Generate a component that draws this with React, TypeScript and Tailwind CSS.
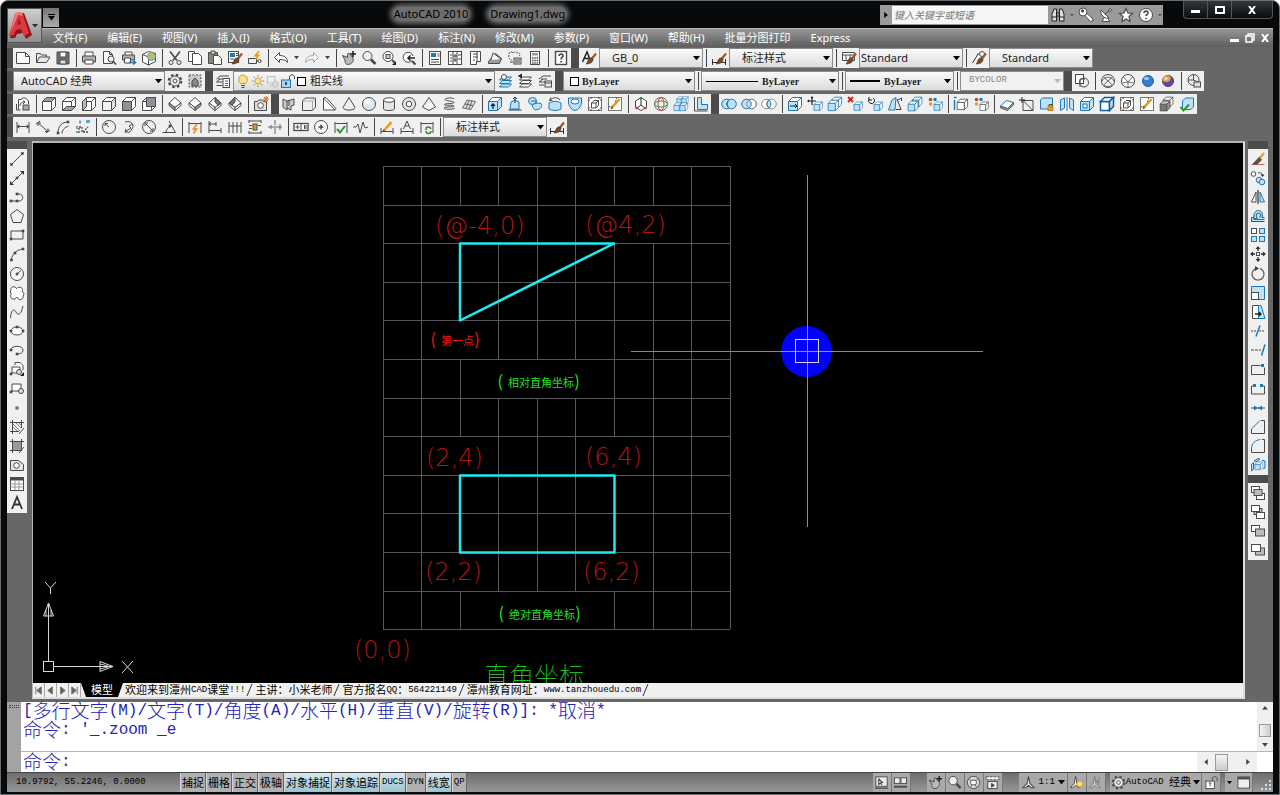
import React, { useState } from 'react';

const K = '#4a4a4a';
const B = '#1f78b4';
const L = '#bfe1f6';
const G = '#c9cdd2';
const O = '#e79a1c';

const Box = ({ x = 0, y = 0, s = 1, stroke = K, front = '#fff', top = '#fff', side = '#fff' }: {
  x?: number; y?: number; s?: number; stroke?: string; front?: string; top?: string; side?: string;
}) => (
  <g transform={`translate(${x} ${y}) scale(${s})`} stroke={stroke}>
    <path d="M1.500 5.500h9v9h-9z" fill={front} />
    <path d="M1.500 5.500l4-4h9l-4 4z" fill={top} />
    <path d="M10.500 5.500l4-4v9l-4 4z" fill={side} />
  </g>
);

const Iso = ({ a = '#fff', b = '#fff', c = '#fff' }: { a?: string; b?: string; c?: string }) => (
  <>
    <path d="M8 1.500l6 5.500L8 11.500 2 7z" fill={a} />
    <path d="M2 7v2.500L8 14.500v-3z" fill={b} />
    <path d="M14 7v2.500L8 14.500v-3z" fill={c} />
  </>
);

const Dots = ({ pts }: { pts: [number, number][] }) => (
  <>{pts.map(([x, y]) => <rect key={`${x}-${y}`} x={x - 1} y={y - 1} width="2" height="2" fill={K} strokeWidth=".6" />)}</>
);

const Brush = () => (
  <>
    <path d="M15 3.500L10.500 9" stroke="#9a5a2c" strokeWidth="2.200" />
    <path d="M11.500 8c1 1 .5 3.500-1 4.500-1.500 1-4 1.500-5.500 1.500 2-1.500 1.500-5 4-6z" fill="#7a4a28" stroke="#5b3418" strokeWidth=".6" />
  </>
);

const Pencil = () => (
  <>
    <path d="M5 11.500L12.500 3" stroke={O} strokeWidth="2.600" />
    <path d="M4 13l.5-2.500 1.500 1.500z" fill={K} stroke={K} strokeWidth=".5" />
  </>
);

const Page = ({ x = 0 }: { x?: number }) => (
  <path transform={`translate(${x} 0)`} d="M2.500 1.500h6l3 3v9h-9zM8.500 1.500v3h3" fill="#fff" />
);

const Layers = ({ fill = '#fff', stroke = K, x = 0 }: { fill?: string; stroke?: string; x?: number }) => (
  <g transform={`translate(${x} 0)`} fill={fill} stroke={stroke}>
    <path d="M1.500 14l3-3h9l-3 3z" />
    <path d="M1.500 10.500l3-3h9l-3 3z" />
    <path d="M1.500 7l3-3h9l-3 3z" />
  </g>
);

const DimEnds = () => <path d="M2 3v11M14 3v11" />;

const Globe = () => (
  <>
    <circle cx="8" cy="8" r="6.500" />
    <path d="M3.500 4l9 8M12.500 4l-9 8M2 8c3-5 9-5 12 0M4 12c2 2 6 2 8 0" strokeWidth=".8" />
  </>
);

const Stamp = ({ fill = '#fff' }: { fill?: string }) => (
  <>
    <rect x="1.500" y="1.500" width="13" height="13" fill={fill} stroke="#777" />
    <path d="M4.500 7l2.500-2.500h4.500v5L9 12H4.500zM4.500 7H9v5M9 7l2.500-2.500" fill="#fff" />
    <path d="M1 4h2M1 12h2M13 4h2M13 12h2M4 1v2M12 1v2M4 13v2M12 13v2" />
  </>
);

const Gear = () => (
  <>
    <circle cx="8" cy="8" r="6.300" strokeWidth="2" strokeDasharray="2.600 2.350" />
    <circle cx="8" cy="8" r="5" fill="#eee" />
    <circle cx="8" cy="8" r="2" fill="#fff" />
  </>
);

const Palette = () => (
  <>
    <circle cx="3.500" cy="3.500" r="1.800" fill="#c8432e" stroke="none" />
    <rect x="6.500" y="2" width="3" height="3" fill={B} stroke="none" />
    <rect x="2" y="6.500" width="3" height="3" fill={O} stroke="none" />
  </>
);

const icons: Record<string, React.ReactNode> = {
  new: <path d="M1.500 2.500h9l4 4v7h-13zM10.500 2.500v4h4" fill="#fff" />,
  open: <path d="M1.500 12.500v-9h4l1 1.500h5v2M1.500 12.500l3-5.500h10.500l-3.500 5.500z" fill="#e8e8e8" />,
  save: <><path d="M2 2h12v12H2z" fill="#6b7078" /><path d="M5 2h6v5H5z" fill="#fff" /><path d="M5 10h6v4H5z" fill="#ddd" /></>,
  print: <><path d="M4 6V2h8v4" fill="#fff" /><path d="M1.500 6h13v6h-13z" fill="#aeb3b8" /><path d="M4 10h8v4H4z" fill="#fff" /></>,
  preview: <><Page /><circle cx="10" cy="9" r="3" fill="#e4f1fa" /><path d="M12 11l3 3.500" strokeWidth="1.800" /></>,
  publish: <><path d="M4 5V2h7v3" fill="#fff" /><path d="M1.500 5h12v5h-12z" fill="#aeb3b8" /><path d="M3.500 8h6v5h-6z" fill="#fff" /><path d="M8 12.500h6M12 10.500l2.500 2-2.500 2" stroke={B} strokeWidth="1.600" /></>,
  dwf: <><path d="M1.500 4.500l6-3 7 2v8l-7 3.500-6-3z" fill="#fff" /><path d="M1.500 4.500l6 2.500v8M7.500 7l7-3.500" /><circle cx="10.500" cy="6.500" r="4" fill="#8fc1dc" stroke="#6c9a6c" /><path d="M8 5c2-3 5-1 5.500 1-1 3-4 2-5.500-1z" fill="#e2b23a" stroke="none" /></>,
  cut: <><path d="M3 1.500l7 9M13 1.500l-7 9" strokeWidth="1.600" /><circle cx="4" cy="12.500" r="2" /><circle cx="12" cy="12.500" r="2" /></>,
  copy: <><path d="M1.500 1.500h6v10h-6z" fill="#fff" /><path d="M5.500 3.500h6l3 3v8h-9z" fill="#fff" /></>,
  paste: <><path d="M1.500 2.500h9v11h-9z" fill="#8c8478" /><path d="M4 1h4v3H4z" fill="#ddd" /><path d="M6.500 5.500h5l3 3v6h-8z" fill="#fff" /></>,
  match: <><rect x="1.500" y="1.500" width="10" height="11" fill="#fff" /><rect x="3" y="3" width="5" height="4" fill={B} stroke="none" /><path d="M9 3.500h2M9 5.500h2M3 9h4" /><Brush /></>,
  blockEdit: <><path d="M1.500 8.500h8v5h-8zM9.500 11h5" /><circle cx="12.500" cy="11" r="1.500" fill="#fff" /><path d="M12 1l-3.500 4.500h3L9 9" stroke={O} strokeWidth="1.800" /></>,
  undo: <path d="M1.500 7.500l5-5v3c5 0 8 2 8 7-1.500-2.500-4-3-8-3v3z" fill="#fff" />,
  redo: <path d="M14.500 7.500l-5-5v3c-5 0-8 2-8 7 1.500-2.500 4-3 8-3v3z" fill="#f4f4f4" stroke="#aaa" />,
  pan: <><path d="M1.500 5.500l5 2V4c1-1 2-1 2.500 0l3 4c1 3-1 6-4.500 6.500C4 14.500 4 12 4 10z" fill="#b9b9b9" /><path d="M12 1v6M9 4h6" strokeWidth="1.600" stroke="#222" /></>,
  zoom: <><circle cx="6.500" cy="6" r="4.500" fill="#e6f1f8" /><path d="M10 9.500l4.500 4.500" strokeWidth="2.600" /></>,
  zoomWin: <><circle cx="7" cy="6.500" r="5" fill="#fff" /><rect x="5" y="4.500" width="4" height="4" fill="#ccc" /><path d="M11 10l2.500 2.500" strokeWidth="2" /><path d="M15 11v4h-4z" fill="#222" stroke="none" /></>,
  zoomPrev: <><path d="M11 10.500A5 5 0 1 1 12 6" fill="#fff" /><path d="M14 8H7.500M9.500 5.500L7 8l2.500 2.500" stroke="#222" strokeWidth="1.500" /><path d="M11 11l3.500 3.500" strokeWidth="2.200" /></>,
  props: <><rect x="2.500" y="1.500" width="11" height="13" fill="#fff" /><rect x="4" y="3" width="5" height="4" fill={B} stroke="none" /><path d="M10.500 4h2M10.500 6h2M4 9.500h8M4 12h8" /></>,
  design: <><rect x="1.500" y="1.500" width="13" height="13" fill="#fff" /><path d="M6 2v12M10 2v12M3 5h2M3 8h2M3 11h2M7 5h2v2H7zM7 9h2v2H7zM11 5h3M11 9h3" /></>,
  palettes: <><path d="M3.500 1.500h10v10h-4v3h-6z" fill="#fff" /><path d="M6 4h5M6 7h5M6 10h2M10 2v9" /></>,
  sheet: <><path d="M1.500 11.500l7-8 6 5-2 5h-11z" fill="#9b9fa3" /><path d="M4 10L6 3l8 6" fill="#fff" /></>,
  markup: <><path d="M2 4c0-2 3-3 4-1 2-2 4-1 4 0 3-1 4 2 2 3M2 5c-1 3 1 5 3 5" strokeDasharray="2 1" /><rect x="7" y="8" width="7" height="6" fill="#ddd" /><path d="M8 10h5M8 12h5M3 12h3" /></>,
  calc: <><rect x="3.500" y="1.500" width="9" height="13" fill="#fff" /><rect x="5" y="3" width="6" height="2.500" fill="#999" stroke="none" /><path d="M5 8h6M5 10.500h6M5 13h6" strokeDasharray="1.500 .8" strokeWidth="1.500" /></>,
  help: <><rect x="2.500" y="1.500" width="11" height="13" fill="#fff" strokeWidth="1.400" /><path d="M6 6c0-2.500 4.500-2.500 4 0 0 1.500-2 1.500-2 3.500M8 11v1.500" strokeWidth="1.700" /></>,
  textStyle: <><path d="M1.500 12L6 2l4 10M3.500 8.500h5" strokeWidth="1.500" stroke="#222" /><Brush /></>,
  dimStyle: <><path d="M1.500 9v6M14.500 9v6M1.500 12.500h13" stroke="#333" /><Brush /></>,
  tableStyle: <><path d="M1.500 2.500h12v8h-12zM1.500 5h12M5 5v5M9 5v5" fill="#fff" /><Brush /></>,
  leaderStyle: <><path d="M1.500 13L7 4h3" stroke="#333" /><circle cx="11" cy="4" r="2.500" fill="#fff" /><Brush /></>,
  gear: <Gear />,
  wsSave: <><rect x="2" y="2" width="12" height="12" strokeDasharray="2 1.500" fill="#ccc" /><path d="M5 8l3-3 3 3v5H5z" fill="#8a8a8a" /></>,
  layerProps: <><path d="M5 3h9M3 6h6M1.500 9h6M1.500 12.500h6M5 3L1.500 6M5 6L1.500 9" /><rect x="8" y="5.500" width="6.500" height="9" fill="#fff" /><path d="M10 8h3M10 10.500h3M10 12.500h3" stroke={B} /></>,
  bulb: <><path d="M5.500 10.500C2 7 4 2 8 2s6 5 2.500 8.500z" fill="#fbe28a" stroke="#c79a2c" /><path d="M6 12.500h4M6.500 14.500h3" /></>,
  sun: <><circle cx="8" cy="8" r="3.500" fill="#fbe28a" stroke="#c79a2c" /><path d="M8 1v2M8 13v2M1 8h2M13 8h2M3 3l1.500 1.500M11.500 11.500L13 13M13 3l-1.500 1.500M4.500 11.500L3 13" stroke="#8a7a40" /></>,
  vpFreeze: <g stroke="#bbb"><rect x="2.500" y="2.500" width="8" height="7" fill="#eee" /><circle cx="11" cy="11" r="3" fill="#ddd" /><path d="M5 12h2" /></g>,
  unlock: <><path d="M9.500 7V4c0-3 5-3 5 0v2" /><rect x="1.500" y="7" width="9" height="7.500" fill="#a9d3ee" stroke={B} /><path d="M6 9v3" stroke="#123" strokeWidth="1.500" /></>,
  layCurrent: <><Layers fill={L} stroke={B} x={1} /><circle cx="7" cy="4" r="2.500" fill="#fff" /></>,
  layPrev: <><Layers x={1} /><path d="M5 1L1.500 3 5 5" fill="#222" stroke="#222" /></>,
  layState: <><path d="M6 3h8M4 6h6M2 9h6M2 12h5" /><path d="M6 3L2 6M6 6L2 9" /><rect x="8" y="8" width="6.500" height="6" fill="#eee" /><path d="M8 10h6" /></>,
  vs2d: <><rect x="1.500" y="1.500" width="8" height="9" fill="#fff" /><circle cx="10" cy="9.500" r="4.500" fill="none" /><path d="M6 14V6h5" /></>,
  vsWire: <Globe />,
  vsHidden: <><circle cx="8" cy="8" r="6.500" fill="#fff" /><path d="M3.500 4l4.500 5 4.500-5M8 9v5M2.500 10l5.500-1 5.500 1" strokeWidth=".8" /></>,
  vsReal: <><circle cx="8" cy="8" r="5.500" fill="#2f80cf" stroke="#1f62a5" /><ellipse cx="6.500" cy="5.500" rx="2.500" ry="1.700" fill="#9ccaf0" stroke="none" /></>,
  vsConcept: <><circle cx="8" cy="8" r="5.500" fill="#5a4aa8" stroke="#4a3a80" /><path d="M2.500 8c0-5 5-7 8-4 1 3-2 7-8 4z" fill="#eda33a" stroke="none" /><circle cx="6" cy="5.500" r="1.500" fill="#fbe0a0" stroke="none" /></>,
  vsManage: <><circle cx="7.500" cy="7" r="5.500" /><path d="M7.500 1.500v5.500L12 9M2 7h6" /><rect x="8" y="9" width="6.500" height="5" fill="#ddd" /></>,
  viewMgr: <><path d="M3.500 13.500v-10h3l1-1.500h3l3 3v3" fill="#fff" /><path d="M5 10c0-3 2-4 4-4M8 4.500L10 6 8 8" /><path d="M1.500 8v6h4" /><rect x="8" y="9" width="6" height="5" fill="#aaa" /></>,
  vTop: <Box top="#9a9fa5" />,
  vBottom: <><Box /><path d="M1.500 14.500l4-4h9l-4 4z" fill="#9a9fa5" /></>,
  vLeft: <><Box /><path d="M1.500 14.500v-9l4-4v9z" fill="#b5b9be" /></>,
  vRight: <Box side="#e0e3e6" front="#f4f4f4" />,
  vFront: <Box front="#8b929a" />,
  vBack: <><Box /><path d="M5.500 1.500h9v9h-9z" fill="#8b929a" /></>,
  isoSW: <Iso b="#9a9fa5" />,
  isoSE: <Iso c="#9a9fa5" />,
  isoNE: <><Iso /><path d="M8 1.500l6 5.500-3 2.200L8 6z" fill="#70767d" /></>,
  isoNW: <><Iso /><path d="M8 1.500L2 7l3 2.200L8 6z" fill="#70767d" /></>,
  camera: <><path d="M1.500 5.500h3l1-1.500h4l1 1.500h3v9h-12z" fill="#ddd" /><circle cx="7.500" cy="9.500" r="2.800" fill="#fff" /><path d="M13 0v6M10 3h6M11 1l4 4M15 1l-4 4" stroke="#e06a1c" /></>,
  polysolid: <><path d="M2 3l4 2v9l-4-3zM6 5l7-2v6l-3 1v4l-4-2" fill={G} /><path d="M8 4v6" /></>,
  box: <><path d="M1.500 5l3-3h10v9l-3 3.500h-10z" fill="#eee" /><path d="M1.500 5h10v9.500M11.500 5l3-3" stroke="#aaa" /></>,
  wedge: <path d="M2.500 2l11.500 12H2.500zM2.500 2L5 1.500l10 11-1 1.500" fill="#fff" />,
  cone: <path d="M8 1.500l6 10c-1 3.500-11 3.500-12 0z" fill="#eee" />,
  sphere: <><circle cx="8" cy="8" r="6.500" fill="#dde8f0" /><ellipse cx="6.500" cy="5.500" rx="3" ry="2.500" fill="#fff" stroke="none" /></>,
  cylinder: <><path d="M2.500 4v9c1 2 10 2 11 0V4" fill="#e4e4e4" /><ellipse cx="8" cy="4" rx="5.500" ry="2.200" fill="#fff" /></>,
  torus: <><circle cx="8" cy="8" r="6.500" fill="#e4e4e4" /><circle cx="8" cy="8" r="2.800" fill="#fff" /></>,
  pyramid: <path d="M8 1.500L14.500 11 8 14.500 1.500 11z" fill="#f4f4f4" />,
  helix: <path d="M13 3c-2-2-9-1-9 .5S13 5 13 6.500 4 7 3.500 8.500 13 8.500 13 10s-10 .5-10 2 8 2 11 0" />,
  planar: <path d="M1.500 12L6 4l8.500 1.500L10 13.500zM4 8l8 1.500M8 4.500L5 12.500M11 5L8 13" fill="#ddd" strokeWidth=".8" />,
  presspull: <><Box stroke={B} front={L} top="#fff" side={L} /><path d="M6 13V8M4 10l2-2 2 2" stroke="#124" strokeWidth="1.300" /></>,
  extrude: <><path d="M4 6l4-2 4 2v7H3z" fill={L} stroke={B} /><path d="M8 7V1M6 3l2-2 2 2M1.500 14h13" stroke="#234" /></>,
  sweep: <><ellipse cx="5.500" cy="5" rx="4" ry="3.500" fill={L} stroke={B} /><path d="M5 8.500c4-1 5-2 9-1 2 3-1 6-4 6-3 1-4-1-5-5z" fill={L} stroke={B} /><path d="M4 5h5v3" stroke={B} /></>,
  revolve: <><path d="M2 7c3-2 9-2 12 0v6c-3 2-9 2-12 0z" fill={L} stroke={B} /><path d="M3 4c3-3 8-3 10 0M4 1.500L2.500 4.500h3" /></>,
  loft: <><path d="M1.500 2h13v5c-1 4-3 7-6.500 7.500C4.500 14 2.500 11 1.500 7z" fill={L} stroke={B} /><ellipse cx="8" cy="5.500" rx="4" ry="2.500" fill="#fff" stroke={B} /></>,
  section: <Stamp />,
  sectionEdit: <><rect x="1.500" y="1.500" width="13" height="13" fill="#fff" stroke="#777" /><path d="M1.500 11C5 11 9 8 9.500 1.500" strokeDasharray="2 1" /><Pencil /></>,
  ucs3d: <><path d="M8 1.500l5.500 3.500v6L8 14.500 2.500 11V5z" fill="#fff" /><path d="M8 3v6l-4 3M8 9l4 3" stroke="#333" /><path d="M8 1.500v2" stroke="#2a8a3a" strokeWidth="2" /><path d="M2.500 12.500l2-1M11.500 11.500l2 1" stroke="#c33" strokeWidth="2" /></>,
  orbit: <><circle cx="8" cy="8" r="6.500" stroke="#666" /><ellipse cx="8" cy="8" rx="3" ry="6.500" stroke="#c33" /><ellipse cx="8" cy="8" rx="6.500" ry="3" stroke="#3a9a4a" /></>,
  array3d: <><Box s={0.5} x={3} y={0} stroke={B} front={L} /><Box s={0.5} x={8} y={0} stroke={B} front={L} /><Box s={0.6} x={0} y={6} stroke={B} front={L} /><Box s={0.6} x={6} y={6} stroke={B} front={L} /></>,
  align3d: <><path d="M4.500 1.500h4v7h6v5h-10z" fill={L} stroke={B} /><path d="M1.500 1v14h13" /></>,
  union: <g stroke={B}><circle cx="5.500" cy="8" r="4.800" fill={L} /><circle cx="10.500" cy="8" r="4.800" fill={L} /><path d="M8 4c-2 2-2 6 0 8" /></g>,
  subtract: <><circle cx="10.500" cy="8" r="4.800" fill="#fff" stroke="#888" /><circle cx="5.500" cy="8" r="4.800" fill={L} stroke={B} /><circle cx="10.500" cy="8" r="4.800" stroke="#888" /></>,
  intersect: <><circle cx="5.500" cy="8" r="4.800" fill="#fff" stroke="#888" /><circle cx="10.500" cy="8" r="4.800" fill="#fff" stroke="#888" /><path d="M8 4c2.500 2 2.500 6 0 8-2.500-2-2.500-6 0-8z" fill={L} stroke={B} /></>,
  extrudeFace: <><Box stroke={B} front={L} /><path d="M3 10h7M8 8l2 2-2 2" stroke="#123" /></>,
  moveFace: <><path d="M5 1v8M1 5h8M4 2l1-1 1 1M2 4L1 5l1 1" stroke="#222" strokeWidth="1.200" /><Box x={6} y={5} s={0.65} stroke={B} front={L} /></>,
  offsetFace: <><Box x={3} y={0} s={0.8} stroke={B} front="#fff" /><Box x={0} y={3} s={0.8} stroke={B} front={L} top="#fff" /></>,
  deleteFace: <><path d="M1 1l5 5M6 1L1 6" stroke="#c22" strokeWidth="1.800" /><Box x={6} y={5} s={0.65} stroke={B} front={L} /></>,
  rotateFace: <><path d="M6 2a3 3 0 1 1-4 1M2 1v3h3" stroke="#222" /><Box x={6} y={5} s={0.65} stroke={B} front={L} /></>,
  taperFace: <><path d="M1.500 14L5 4l4-2.500-1 12.500z" fill={L} stroke={B} /><path d="M10 3l4 10.500H9M11 4l3.500-2v3" stroke="#345" /></>,
  copyFace: <><Box x={4} y={0} s={0.75} stroke={B} front={L} /><Box x={0} y={4} s={0.75} stroke={B} front={L} /></>,
  colorFace: <><Palette /><Box x={6} y={5} s={0.65} stroke={B} front={L} /></>,
  copyEdge: <><path d="M1.500 14V4M3.500 1.500H1" stroke={B} strokeWidth="1.400" /><Box x={3} y={2} s={0.8} front="#fff" /></>,
  colorEdge: <><Palette /><Box x={6} y={5} s={0.65} /></>,
  imprint: <><path d="M1.500 10l6-5.500 7 2-6 6z" fill="#fff" stroke={B} /><path d="M1.500 10v2l7 2.500 6-5.500V6.500l-6 6z" fill="#999" stroke="#567" /></>,
  clean: <><path d="M4 4.500h10v10H4zM4 4.500l10 10" /><path d="M3 1v6M0 4h6" stroke="#222" /></>,
  separate: <><path d="M1.500 13V4l2-2h10v9l-2 2z" fill={L} stroke={B} /><rect x="9" y="10" width="5" height="4.500" fill={O} stroke="#a06a10" strokeWidth=".7" /><path d="M10 10V8.500h3V10" /></>,
  shell: <><path d="M1.500 4l4-2v10l-4 2.500zM14.500 4l-4-2v10l4 2.500z" fill={L} stroke={B} /><path d="M8 1v14" stroke={B} /></>,
  check: <><Box stroke={B} front={L} side={L} /><rect x="4" y="8" width="4" height="4" fill="#fff" stroke={B} /></>,
  solidBlue: <g strokeWidth="1.500"><Box stroke="#0f5f9f" front="#fff" side={L} /></g>,
  darkBox: <><Box x={3} y={0} s={0.75} /><Box x={0} y={4} s={0.75} front="#777" side="#999" top="#ccc" /></>,
  validate: <><path d="M3.500 5l3-3h8v9l-3 2.500h-8z" fill={L} stroke={B} /><path d="M1.500 11l3 3.500L10 8.500" stroke="#2a9a2a" strokeWidth="2" /></>,
  dimLinear: <><DimEnds /><path d="M2 7.500h12M4.500 6L2 7.500 4.500 9M11.500 6L14 7.500 11.500 9" /></>,
  dimAligned: <path d="M1 5l4-3M11 14l4-3M3 4l10 8.500M3 7V4h3M13 9.500v3h-3" />,
  dimArc: <><path d="M3 14C3 7 7 3 13 3M7 14.500C7 11 10 8 13.500 7" /><Dots pts={[[13, 3], [3, 14]]} /></>,
  dimOrd: <><path d="M4 14V8h3v5h7M8 13l5-5" strokeDasharray="2 1" strokeWidth="1.300" /><path d="M5 1.500v3M12 1v3M14 1v3M2 7v3M2 12v2" stroke={B} strokeWidth="1.300" /></>,
  dimRadius: <><circle cx="8" cy="8" r="6.500" /><path d="M8 8L4 4.500M4 7V4.500h3" /></>,
  dimJog: <><path d="M4 3c6-2 10 3 7 7-1 2-3 3-4 4" /><path d="M12 5L8 7l2 2-6 4M5 10l-1 3h3" /></>,
  dimDia: <><circle cx="8" cy="8" r="6.500" /><path d="M4 4l8 8M4 7V4h3M12 9v3H9" /></>,
  dimAngle: <><path d="M1.500 13.500h13L8 2M5 13.500c0-3 2-5 4.500-6" /><Dots pts={[[9, 7]]} /></>,
  dimQuick: <><DimEnds /><path d="M2 4.500h12" /><path d="M10 5L6.500 10h3L6.500 14.500" stroke={O} strokeWidth="1.800" /></>,
  dimBase: <path d="M2 2v12M9 3v4M2 5h7M14 9v5M2 11.500h12M4 3.500L2 5l2 1.500" />,
  dimCont: <path d="M2 3v11M6 3v11M10 3v11M14 3v11M2 7h12" />,
  dimSpace: <><path d="M2 2h12M2 14h12M2 1v3M14 1v3M2 12v3M14 12v3M2 6.500h3M2 9.500h3M11 6.500h3" /><rect x="6" y="5" width="4" height="6" fill={O} /></>,
  dimBreak: <path d="M8 1v5M8 9v6M1 8h14M4 6v4M13 5v6" stroke="#666" />,
  tolerance: <><rect x="1" y="4.500" width="14" height="7" fill="#fff" strokeWidth="1.300" /><path d="M8 4.500v7M4.500 6v4M2.500 8h4M11.500 6v4M13 6v4" /></>,
  center: <><circle cx="8" cy="8" r="6.500" fill="#fff" /><path d="M8 5.500v5M5.500 8h5" strokeWidth="1.500" /></>,
  inspect: <><DimEnds /><path d="M2 4.500h12" /><path d="M4 10l3 3.500L12 7" stroke="#2a9a2a" strokeWidth="2" /></>,
  jogLine: <path d="M0 8h3l2-3 2 9 3-11 2 6 3-1" />,
  dimEdit: <><path d="M2 9v6M14 9v6M2 12.500h12" /><Pencil /></>,
  dimText: <><path d="M2 9v6M14 9v6M2 12.500h12M4.500 10L8 2l3.500 8M6 7h4" /></>,
  dimUpdate: <><DimEnds /><path d="M2 4.500h12" /><path d="M7 11a2.500 2.500 0 0 1 5-1M12 12a2.500 2.500 0 0 1-5 0" stroke="#2a8a3a" strokeWidth="1.400" /></>,
  line: <><path d="M2.500 13.500l11-11" /><Dots pts={[[2.5, 13.5], [13.5, 2.5]]} /></>,
  xline: <><path d="M2 14L14 2" /><path d="M1 11v4h4zM11 1h4v4z" fill="#333" stroke="none" /><Dots pts={[[8, 8]]} /></>,
  pline: <><path d="M2 12h8c5 0 5-7 0-7H8" /><Dots pts={[[2, 12], [8, 12], [8, 5]]} /></>,
  polygon: <path d="M8 1.500l6.500 5-2.500 8H4l-2.500-8z" fill="#f2f2f2" />,
  rect: <><path d="M2 4h12v8H2z" fill="#f2f2f2" /><Dots pts={[[2, 12], [14, 4]]} /></>,
  arc: <><path d="M2.500 14C3 8 7 4 14 3" /><Dots pts={[[2.5, 14], [6, 7], [14, 3]]} /></>,
  circle: <><circle cx="8" cy="8" r="6.500" fill="#f7f7f7" /><path d="M8 8l4-3.500" /><Dots pts={[[8, 8]]} /></>,
  revcloud: <path d="M7.500 3.500C6 .5 1 1.500 2 5c-1 1-1 3 .5 4-2 2-.5 5.500 2.500 5 1.500 0 2-1 3-2 1.500 4 7 3 6-1 1.500-1 1-4-1-4.500C15 3.500 11 .5 7.500 3.500z" fill="#fff" />,
  spline: <path d="M1.500 14C2 6 5 4 7 8s5 3 7-6" />,
  ellipse: <><ellipse cx="8" cy="8" rx="6" ry="4" fill="#fff" /><Dots pts={[[2, 8], [14, 8], [8, 4]]} /></>,
  ellArc: <><path d="M2 8c0-5 12-5 12 0 0 3-3 4-6 4" /><Dots pts={[[2, 8], [8, 12]]} /></>,
  insert: <><path d="M6 4V1.500h5l3 3V9" fill="#fff" /><path d="M3 12V6h8v6H2" fill="#fff" /><circle cx="10" cy="11" r="2.500" fill="#ddd" /><path d="M15 11v4h-4z" fill="#222" stroke="none" /><Dots pts={[[2, 13]]} /></>,
  block: <><path d="M3 12V4h9v7H2" fill="#fff" /><circle cx="12" cy="11" r="2.500" fill="#ddd" /><Dots pts={[[2, 12]]} /></>,
  point: <rect x="7" y="7" width="2" height="2" />,
  hatch: <><path d="M3.500 1v14M1 3.500h14M1 12.500h9M12.500 1v8M10 15l5-6" /><path d="M4 5l7 7M4 8l4 4M7 4l5 5M10 4l2 2" strokeWidth=".7" /></>,
  gradient: <><rect x="3.500" y="3.500" width="9" height="9" fill="#9a9a9a" /><path d="M3.500 1v14M1 3.500h14M1 12.500h9M12.500 1v8M10 15l5-6" /></>,
  region: <><path d="M1.500 3.500h8l5 4v6h-13z" fill="#e4e4e4" /><circle cx="7.500" cy="8.500" r="2.800" fill="#fff" /></>,
  table: <><rect x="1.500" y="1.500" width="13" height="13" fill="#fff" /><path d="M1.500 3h13" strokeWidth="3" /><path d="M1.500 8h13M1.500 11h13M6 4v10M10 4v10" stroke="#999" /></>,
  mtext: <path d="M3 14L8 2l5 12M5 9.500h6" stroke="#333" strokeWidth="1.800" />,
  erase: <><path d="M1.500 13.500h13" stroke="#b07050" /><path d="M14 2L9 8" stroke="#e2a040" strokeWidth="2.500" /><path d="M9 6.500l2.500 2.500L7 13H3z" fill="#7a4a30" /></>,
  mcopy: <><circle cx="3.500" cy="4" r="2.300" fill="#fff" /><path d="M8 3c2-1 4 0 4.500 2" /><path d="M10.500 4.500h4l-2 2.500z" fill="#333" stroke="none" /><circle cx="9" cy="10" r="2.800" fill={L} stroke={B} /><circle cx="12" cy="12" r="2.800" fill={L} stroke={B} /></>,
  mirror: <><path d="M6 3v10H1.500z" fill="#fff" /><path d="M10 3v10h4.500z" fill={L} stroke={B} /><path d="M8 1v14" strokeWidth="1.400" /></>,
  offset: <><path d="M14.500 13.500h-13v-4H4C3.500 5 5.500 2.500 8.500 2.500S13 5 12 9.500h2.500" fill={L} stroke="#356" /><path d="M14.500 11.500H4v-1h3C5.500 7 6.500 5 8.500 5s3 2 1 4.500" stroke={B} strokeWidth="1.200" /></>,
  array: <><rect x="1.500" y="1.500" width="5" height="5" fill="#fff" /><g stroke={B} fill={L}><rect x="9.500" y="1.500" width="5" height="5" /><rect x="1.500" y="9.500" width="5" height="5" /><rect x="9.500" y="9.500" width="5" height="5" /></g></>,
  move: <><path d="M8 2v3M8 11v3M2 8h3M11 8h3" strokeWidth="1.300" stroke="#222" /><path d="M8 0l2.500 3h-5zM8 16l2.500-3h-5zM0 8l3-2.500v5zM16 8l-3-2.500v5z" fill="#333" stroke="none" /><rect x="6.500" y="6.500" width="3" height="3" /></>,
  rotate: <><path d="M10 2.500a6 6 0 1 1-4 0" stroke="#666" strokeWidth="1.400" /><path d="M5 0l4 2.500L5 5z" fill="#444" stroke="none" /></>,
  scale: <><path d="M1.500 1.500h13v13h-13z" fill={L} stroke={B} /><rect x="1.500" y="7.500" width="7" height="7" fill="#fff" /></>,
  stretch: <><path d="M8 1.500H2.500v13H9" fill="#fff" /><path d="M8.500 1.500H11l4 13H8.500z" fill={L} stroke={B} /><path d="M5 10h6M9 8l2 2-2 2" stroke="#222" strokeWidth="1.300" /></>,
  trim: <><path d="M1 8h5M9 8h6" strokeDasharray="2 1" /><path d="M10 2.500L6 13.500" stroke={B} strokeWidth="1.500" /></>,
  extend: <><path d="M1 8h10" strokeDasharray="3 1" /><path d="M15 2.500l-3.500 11" stroke={B} strokeWidth="1.500" /></>,
  breakPt: <><path d="M1.500 4.500v9h13v-7M1.500 4.500h9" /><rect x="11" y="3" width="3" height="3" fill={B} stroke="none" /></>,
  breakLn: <><path d="M3 5H1.500v8h13V5H13" /><rect x="3" y="3" width="3" height="3" fill={B} stroke="none" /><rect x="10" y="3" width="3" height="3" fill={B} stroke="none" /></>,
  join: <><path d="M1 8h14" stroke={B} strokeWidth="1.200" /><path d="M4 5.500L8 8l-4 2.500zM12 5.500L8 8l4 2.500z" fill={B} stroke="none" /></>,
  chamfer: <><path d="M1.500 10v4.500h13v-13H11" /><path d="M1.500 10L10 1.500" stroke={B} /></>,
  fillet: <><path d="M1.500 11v3.500h13v-13H12" /><path d="M1.500 11c0-6 4-9 9-9.500" stroke={B} /></>,
  explode: <><Box x={4} y={4} s={0.6} stroke={B} front={L} /><path d="M1.500 7l2-1.500v7L1.500 14zM4 4l4-2.500 2 .5-3 2.500zM12 3l3 1v7l-2 1" fill={L} stroke={B} /></>,
  front: <><rect x="1.500" y="1.500" width="8" height="6" fill="#fff" /><rect x="6.500" y="8.500" width="8" height="6" fill="#fff" /><rect x="4" y="4.500" width="8" height="6" fill="#bbb" /></>,
  back: <><rect x="4" y="4.500" width="8" height="6" fill="#bbb" /><rect x="1.500" y="1.500" width="8" height="6" fill="#fff" /><rect x="6.500" y="8.500" width="8" height="6" fill="#fff" /></>,
  above: <><rect x="1.500" y="2.500" width="8" height="6" fill="#fff" /><rect x="5.500" y="6" width="9" height="7" fill="#bbb" /></>,
  under: <><rect x="5.500" y="6" width="9" height="7" fill="#bbb" /><rect x="1.500" y="2.500" width="9" height="7" fill="#fff" /></>,
  model: <><rect x="2" y="2" width="12" height="10" fill="#eee" /><path d="M5 4v6l2-1.500 1.500 2M5 4l4 4H7M1 14h14" strokeWidth="1.200" /></>,
  layoutTabs: <><rect x="1.500" y="3" width="6" height="6" fill="#eee" /><rect x="8.500" y="3" width="6" height="6" fill="#eee" /><path d="M1 12.500h14" strokeWidth="2" /></>,
  wheel: <><circle cx="8" cy="8" r="6.500" fill="#ddd" /><rect x="5" y="5.500" width="6" height="5" rx="1.500" fill="#fff" /><path d="M3 4l2.500 2M13 4l-2.500 2M5 13l1-2.500M11 13l-1-2.500" strokeWidth=".8" /></>,
  motion: <><path d="M1 2h14v3H1z" fill="#fff" strokeDasharray="3 1" /><rect x="3" y="7" width="10" height="7.500" fill="#eee" /><path d="M7 9v4l3-2z" fill={K} /></>,
  anno: <path d="M8 1.500L6.500 9 2 13.500h3L8 11l3 2.500h3L9.500 9z" fill="#eee" strokeWidth="1.100" />,
  annoVis: <><path d="M7 1.500L5.500 9 1.500 13.500H4L7 11l3 2.500 2-1L8.500 9z" fill="#eee" /><circle cx="11.500" cy="9.500" r="3" fill="#ffe27a" stroke={O} /></>,
  annoAuto: <g stroke="#777"><path d="M7 1.500L5.500 9 1.500 13.500H4L7 11l3 2.500h3L8.500 9z" fill="#ccc" /><path d="M13 2L9 7h3l-2 4" /></g>,
  lock: <><path d="M9 7V4c0-3 5-3 5 0v3" /><rect x="2" y="6.500" width="9" height="8" fill="#fff" /><path d="M6.500 8.500V12M5 8.500h3" /></>,
  clean2: <><rect x="2" y="2" width="12.500" height="12" fill="#eee" /><path d="M2 3.500h12" strokeWidth="2.500" /></>,
  binocular: <><path d="M2 14V7l2-5h2.500v12zM14 14V7l-2-5H9.500v12z" fill="#ddd" stroke="#222" /><path d="M6.500 6h3v3h-3zM2 10h4.500M9.500 10H14" stroke="#222" /></>,
  key: <><path d="M7 8.500l5.500 6 2-.5.500-2-6-5.500" fill="#fff" /><circle cx="5" cy="5" r="4" fill="#fff" /><circle cx="4.500" cy="4" r="1.200" fill={K} /></>,
  dish: <><path d="M3 3c-1 5 3 9 8 8zM7 7l5-4M6 11l-2 3.500h8L9.500 11" fill="#fff" /><circle cx="12" cy="3" r="1.300" fill="#fff" /></>,
  star: <path d="M8 1.500l2 4.500 4.500.5-3.500 3 1 5L8 12l-4 2.500 1-5-3.500-3L6 6z" fill="#fff" strokeWidth="1.200" />,
  qmark: <><circle cx="8" cy="8" r="6.500" fill="#fff" /><path d="M6 6c0-2.500 4.500-2.500 4 0 0 1.500-2 1.500-2 3M8 10.800v1.500" strokeWidth="1.600" /></>,
};

const Icon = ({ name, className = 'size-4' }: { name: string; className?: string }) => (
  <svg viewBox="0 0 16 16" className={`${className} shrink-0`} fill="none" stroke={K} strokeWidth="1" aria-hidden="true">
    {icons[name]}
  </svg>
);

const Arrow = ({ className = 'w-2 text-black' }: { className?: string }) => (
  <svg viewBox="0 0 8 5" className={`${className} shrink-0`} fill="currentColor" aria-hidden="true">
    <path d="M0 0h8L4 5z" />
  </svg>
);

const Sep = () => (
  <div className="flex w-[6px] shrink-0 justify-center bg-[#f0f0f0] py-px">
    <div className="w-px bg-[#444]" />
  </div>
);

const Grip = ({ width = 'w-2' }: { width?: string }) => (
  <div className={`flex shrink-0 items-center justify-center bg-[#4c4c4c] ${width}`}>
    <div className="h-3 w-1 bg-[radial-gradient(#8a8a8a_35%,transparent_40%)] bg-[length:2px_2px]" />
  </div>
);

const ToolButton = ({ name }: { name: string }) => (
  <button aria-label={name} className="flex w-5 shrink-0 items-center justify-center hover:bg-sky-100">
    <Icon name={name} />
  </button>
);

// '|' draws a separator, 'v' a small drop-down arrow
const Tools = ({ list }: { list: string }) => (
  <div className="flex bg-[#f0f0f0]">
    {list.split(' ').map((name, i) => {
      if (name === '|') return <Sep key={i} />;
      if (name === 'v') {
        return (
          <button key={i} aria-label="more" className="flex w-[11px] items-center justify-center">
            <Arrow className="w-[5px] text-[#444]" />
          </button>
        );
      }
      return <ToolButton key={i} name={name} />;
    })}
  </div>
);

const Combo = ({ label, value, className = '', font = 'text-[11px]', children, disabled = false }: {
  label: string; value: string; className?: string; font?: string; children?: React.ReactNode; disabled?: boolean;
}) => (
  <div className={`relative flex shrink-0 items-center border border-[#8c8c8c] ${font} ${disabled ? 'bg-[#f1f1f1] text-[#888]' : 'bg-linear-to-b from-[#fafafa] to-[#dcdcdc] text-[#222]'} ${className}`}>
    {children}
    <select aria-label={label} disabled={disabled} defaultValue={value} className="h-full min-w-0 flex-1 appearance-none bg-transparent pr-4 outline-none">
      <option>{value}</option>
    </select>
    <div className="pointer-events-none absolute right-[2px]">
      <Arrow className={disabled ? 'w-[7px] text-[#bbb]' : 'w-[7px] text-black'} />
    </div>
  </div>
);

const layerFont = "font-['Liberation_Serif'] text-[10px] font-bold";

const menus = ['文件(F)', '编辑(E)', '视图(V)', '插入(I)', '格式(O)', '工具(T)', '绘图(D)', '标注(N)', '修改(M)', '参数(P)', '窗口(W)', '帮助(H)', '批量分图打印', 'Express'];

const titleGlow = 'rounded-lg bg-[#6e6e6e] px-px leading-[14px] shadow-[0_0_5px_3px_#6e6e6e]';

const TitleBar = () => (
  <header className="relative flex h-[27px] shrink-0 items-start">
    <button aria-label="AutoCAD" className="absolute left-0 top-[7px] z-10 flex h-[35px] w-[35px] items-center border border-[#555] bg-linear-to-b from-[#d0d0d0] to-[#8e8e8e]">
      <svg viewBox="0 0 24 30" className="h-[30px] w-6" aria-hidden="true">
        <path d="M2 27L7 4l9-2 8 22-6 4-3-6-6 1-2 4z" fill="#8e1418" />
        <path d="M1 25L7 2l7-1 7 21-5 3-3-7-5 1-2 5z" fill="#d83a3e" />
        <path d="M9 14l2-7 2 6z" fill="#a3181c" />
        <path d="M7 2l7-1 1 4-5-1-7 17z" fill="#f2787a" />
      </svg>
      <Arrow className="w-[6px] text-[#333]" />
    </button>
    <button aria-label="quick access" className="ml-9 mt-[7px] flex h-[19px] w-4 flex-col items-center justify-center gap-px bg-linear-to-b from-[#777] to-[#aaa]">
      <div className="h-px w-[7px] bg-black" />
      <Arrow className="w-[7px] text-black" />
    </button>
    <h1 className="flex flex-1 justify-center gap-5 pl-5 pt-[6px] text-[11px] text-black">
      <span className={titleGlow}>AutoCAD 2010</span>
      <span className={titleGlow}>Drawing1.dwg</span>
    </h1>
    <div className="mt-1 flex h-5 items-center bg-[#9a9a9a] pr-px">
      <button aria-label="collapse" className="flex w-3 justify-center">
        <Arrow className="w-[6px] -rotate-90 text-black" />
      </button>
      <input aria-label="search" placeholder="键入关键字或短语" className="h-[18px] w-[156px] bg-[#f6f6f6] px-[2px] text-[10px] italic text-black outline-none placeholder:text-[#777]" />
      <div className="flex items-center gap-1 pl-[2px]">
        <Icon name="binocular" />
        <Arrow className="w-1 text-[#555]" />
        <Icon name="key" />
        <Icon name="dish" />
        <Icon name="star" />
        <Icon name="qmark" />
        <Arrow className="w-1 text-[#555]" />
      </div>
    </div>
    <div className="ml-5 flex h-[18px] rounded-b border border-t-0 border-[#555] bg-linear-to-b from-[#33373c] to-[#0c0d0f]">
      <button aria-label="minimize" className="flex w-6 items-center justify-center border-r border-[#555]"><div className="mt-1 h-[3px] w-[9px] bg-white" /></button>
      <button aria-label="maximize" className="flex w-6 items-center justify-center border-r border-[#555]"><div className="h-2 w-[10px] border-2 border-white" /></button>
      <button aria-label="close" className="flex w-10 items-center justify-center">
        <svg viewBox="0 0 8 8" className="size-2" stroke="#fff" strokeWidth="2"><path d="M1 0l6 8M7 0L1 8" /></svg>
      </button>
    </div>
  </header>
);

const MenuBar = () => (
  <nav className="flex h-[19px] shrink-0 items-center gap-5 border-t border-[#b5b5b5] bg-linear-to-b from-[#979797] to-[#5e5e5e] pl-[46px] pr-1 text-[11px] leading-4 text-white">
    {menus.map((m) => <button key={m} className="whitespace-nowrap hover:underline">{m}</button>)}
    <div className="ml-auto flex items-center gap-[6px]">
      <button aria-label="minimize drawing"><div className="mt-1 h-[3px] w-[9px] bg-white" /></button>
      <button aria-label="restore drawing">
        <svg viewBox="0 0 10 10" className="size-[10px]" fill="none" stroke="#fff" strokeWidth="1.500"><path d="M3 3V1h6v6H7M1 3h6v6H1z" /></svg>
      </button>
      <button aria-label="close drawing">
        <svg viewBox="0 0 8 8" className="size-2" stroke="#fff" strokeWidth="2"><path d="M1 0l6 8M7 0L1 8" /></svg>
      </button>
    </div>
  </nav>
);

const Toolbars = () => (
  <div className="flex shrink-0 flex-col gap-[3px] bg-[#676767] pb-1 pt-px">
    <div className="flex h-5">
      <Grip width="w-[6px]" />
      <Tools list="new open save | print preview publish dwf | cut copy paste match blockEdit | undo v redo v | pan zoom zoomWin zoomPrev | props design palettes sheet markup calc | help" />
      <Grip />
      <Tools list="textStyle" />
      <Combo label="text style" value="GB_0" className="w-[104px] pl-3" />
      <Sep />
      <Tools list="dimStyle" />
      <Combo label="dim style" value="标注样式" className="w-[104px] pl-3" />
      <Sep />
      <Tools list="tableStyle" />
      <Combo label="table style" value="Standard" className="w-[104px] pl-px" />
      <Sep />
      <Tools list="leaderStyle" />
      <Combo label="leader style" value="Standard" className="w-[104px] pl-3" />
    </div>
    <div className="flex h-5">
      <Grip width="w-[6px]" />
      <Combo label="workspace" value="AutoCAD 经典" className="w-[152px] pl-[7px]" />
      <Tools list="gear wsSave" />
      <Grip />
      <Tools list="layerProps" />
      <Combo label="layer" value="粗实线" className="w-[262px] pl-px">
        <div className="flex items-center pr-1">
          <Icon name="bulb" />
          <Icon name="sun" className="size-[14px]" />
          <Icon name="vpFreeze" className="size-[15px]" />
          <Icon name="unlock" />
          <div className="ml-px size-[9px] border border-black bg-white" />
        </div>
      </Combo>
      <Tools list="layCurrent layPrev layState" />
      <Grip />
      <Combo label="color" value="ByLayer" className="w-[132px] gap-[3px] pl-[6px]" font={layerFont}>
        <div className="size-[9px] border border-black bg-white" />
      </Combo>
      <Sep />
      <Combo label="linetype" value="ByLayer" className="w-[138px] gap-1 pl-1" font={layerFont}>
        <div className="h-px w-[52px] bg-black" />
      </Combo>
      <Sep />
      <Combo label="lineweight" value="ByLayer" className="w-[109px] gap-1 pl-1" font={layerFont}>
        <div className="h-[2px] w-[30px] bg-black" />
      </Combo>
      <Sep />
      <Combo label="plot style" value="BYCOLOR" className="w-[104px] pl-2" font="font-['Liberation_Mono'] text-[9px]" disabled />
      <Grip />
      <Tools list="vs2d | vsWire vsHidden vsReal vsConcept | vsManage" />
    </div>
    <div className="flex h-5">
      <Grip width="w-[6px]" />
      <Tools list="viewMgr | vTop vBottom vLeft vRight vFront vBack | isoSW isoSE isoNE isoNW | camera" />
      <Grip />
      <Tools list="polysolid box wedge cone sphere cylinder torus pyramid helix planar | presspull extrude sweep revolve loft section sectionEdit | ucs3d orbit array3d align3d" />
      <Grip />
      <Tools list="union subtract intersect | extrudeFace moveFace offsetFace deleteFace rotateFace taperFace copyFace colorFace | copyEdge colorEdge | imprint clean separate shell check solidBlue section sectionEdit darkBox validate" />
    </div>
    <div className="flex h-5">
      <Grip width="w-[6px]" />
      <Tools list="dimLinear dimAligned dimArc dimOrd | dimRadius dimJog dimDia dimAngle | dimQuick dimBase dimCont dimSpace dimBreak | tolerance center inspect jogLine | dimEdit dimText dimUpdate |" />
      <Combo label="dim style control" value="标注样式" className="w-[104px] pl-3" />
      <Tools list="dimStyle" />
    </div>
  </div>
);

const SideBar = ({ list, className }: { list: string; className: string }) => (
  <div className="w-5">
    <div className="flex h-2 items-center justify-center bg-[#4c4c4c]">
      <div className="h-1 w-3 bg-[radial-gradient(#8a8a8a_35%,transparent_40%)] bg-[length:2px_2px]" />
    </div>
    <div className={`flex flex-col bg-[#f0f0f0] ${className}`}>
      {list.split(' ').map((name) => (
        <button key={name} aria-label={name} className="flex flex-1 items-center justify-center hover:bg-sky-100">
          <Icon name={name} />
        </button>
      ))}
    </div>
  </div>
);

const GX = 349.7;
const GY = 23;
const STEP_X = 38.55;
const STEP_Y = 38.6;

// columns whose segment is wiped by a text mask, by row
const wiped: Record<number, number[]> = {
  1: [2, 3, 6, 7],
  4: [2],
  5: [3, 4, 5],
  7: [2, 6],
  10: [2, 6],
  11: [3, 4, 5],
};

const coords: [number, number, string][] = [
  [402, 91, '(@-4,0)'],
  [552, 90, '(@4,2)'],
  [393, 323, '(2,4)'],
  [552, 322, '(6,4)'],
  [392, 437, '(2,2)'],
  [550, 437, '(6,2)'],
  [321, 515, '(0,0)'],
];

const px = (col: number) => Math.round(GX + col * STEP_X);
const py = (row: number) => Math.round(GY + row * STEP_Y);

const Drawing = () => (
  <svg className="absolute inset-0 h-full w-full" fill="none">
    <g stroke="#585858" shapeRendering="crispEdges">
      {Array.from({ length: 13 }, (_, r) => <path key={r} d={`M${px(0)} ${py(r) + 0.5}H${px(9)}`} />)}
      {Array.from({ length: 12 }, (_, r) =>
        Array.from({ length: 10 }, (_, c) =>
          wiped[r]?.includes(c) ? null : <path key={`${r}-${c}`} d={`M${px(c) + 0.5} ${py(r)}V${py(r + 1)}`} />
        )
      )}
    </g>
    <g stroke="#1feaf2" strokeWidth="2.500" strokeLinejoin="round">
      <path d={`M${px(2)} ${py(2) + 0.5}H${px(6)}L${px(2)} ${py(4) + 0.5}z`} />
      <path d={`M${px(2)} ${py(8) + 0.5}H${px(6) + 0.5}V${py(10) + 0.5}H${px(2)}z`} />
    </g>
    <g className="font-['DejaVu_Sans_Light','DejaVu_Sans'] text-[24px] font-extralight" fill="#b41414">
      {coords.map(([x, y, t]) => <text key={t} x={x} y={y}>{t}</text>)}
    </g>
    <g className="font-['Inter','Noto_Sans_CJK_SC'] text-[18px] font-light">
      <g fill="#f01414">
        <text x="397" y="203">(</text>
        <text x="408" y="202" className="text-[11px] font-normal">第一点</text>
        <text x="441" y="203">)</text>
      </g>
      <g fill="#22e022">
        <text x="464" y="245">(</text>
        <text x="475" y="244" className="text-[11px] font-normal">相对直角坐标</text>
        <text x="541" y="245">)</text>
        <text x="465" y="477">(</text>
        <text x="476" y="476" className="text-[11px] font-normal">绝对直角坐标</text>
        <text x="542" y="477">)</text>
        <text x="451" y="542" className="text-[25px] font-thin">直角坐标</text>
      </g>
    </g>
    <circle cx="773.500" cy="208.500" r="25.500" fill="#0202fa" />
    <g shapeRendering="crispEdges">
      <path d="M598 208.500h352" stroke="#b07a68" />
      <path d="M774.500 32v352" stroke="#82986e" />
      <path d="M748 208.500h51" stroke="#9d86d8" />
      <path d="M774.500 183v51" stroke="#8c98d8" />
      <rect x="762.500" y="196.500" width="23" height="23" stroke="#d8d4f0" />
    </g>
    <g stroke="#d8d8d8">
      <rect x="10.500" y="518.500" width="10" height="10" />
      <path d="M15.500 518V460M21 523.500h59" />
      <path d="M15.500 460l-5 13h10zM80 523.500l-13-5v10z" />
      <path d="M15.500 462v11M13 467v6M18 467v6M67 521l8 2M67 526l8-2" />
      <path d="M12 439l5.500 6 5.500-6M17.500 445v6M89 518l11 12M100 518l-11 12" />
    </g>
  </svg>
);

const sheets = ['欢迎来到潭州CAD课堂!!!', '主讲：小米老师', '官方报名QQ：564221149', '潭州教育网址：www.tanzhouedu.com'];

const split = (s: string) => s.match(/[\x20-\x7e]+|[^\x20-\x7e]+/g) ?? [];

const Mixed = ({ text, latin, cjk }: { text: string; latin: string; cjk: string }) => (
  <>
    {split(text).map((t, i) => <span key={i} className={/^[\x20-\x7e]/.test(t) ? latin : cjk}>{t}</span>)}
  </>
);

const navPaths = ['M2 1v8M8 1v8L3 5z', 'M7 1v8L2 5z', 'M3 1v8l5-4z', 'M8 1v8M2 1v8l5-4z'];

const SheetTabs = () => (
  <div className="flex h-[14px] shrink-0 items-stretch bg-[#f0f0f0] text-black">
    {navPaths.map((d) => (
      <button key={d} aria-label="tab scroll" className="flex w-3 items-center justify-center border-r border-[#aaa]">
        <svg viewBox="0 0 10 10" className="size-[9px]" fill="#666" stroke="#666"><path d={d} /></svg>
      </button>
    ))}
    <button className="bg-black px-[10px] text-[11px] leading-[14px] text-white [clip-path:polygon(0_0,100%_0,88%_100%,12%_100%)]">模型</button>
    {sheets.map((s) => (
      <button key={s} className="flex items-center whitespace-pre pl-[2px] leading-[14px]">
        <Mixed text={s} latin="font-['Liberation_Mono'] text-[9px]" cjk="text-[11px]" />
        <svg viewBox="0 0 8 14" className="h-[14px] w-2" stroke="#333" aria-hidden="true"><path d="M2 13L7 1" /></svg>
      </button>
    ))}
  </div>
);

const cmdLatin = "font-['Liberation_Mono'] text-[16px]";
const cmdCjk = 'text-[19px] font-light';

const CommandLine = () => {
  const [command, setCommand] = useState('');

  return (
    <section className="flex h-[70px] shrink-0 bg-white text-[#2424b4]">
      <div className="w-[14px] shrink-0 bg-[#a3a3a3] px-[2px] pt-[3px]">
        <div className="h-[3px] w-[10px] border-y border-dotted border-[#444]" />
      </div>
      <div className="flex min-w-0 flex-1 flex-col">
        <div className="flex h-[50px] border-b border-[#b5b5b5]">
          <div className="flex-1 whitespace-pre pl-[2px]">
            <p className="flex h-[19px] items-center leading-[19px]"><Mixed text="[多行文字(M)/文字(T)/角度(A)/水平(H)/垂直(V)/旋转(R)]: *取消*" latin={cmdLatin} cjk={cmdCjk} /></p>
            <p className="flex h-[19px] items-center leading-[19px]"><Mixed text="命令: '_.zoom _e" latin={cmdLatin} cjk={cmdCjk} /></p>
          </div>
          <div className="flex w-4 flex-col items-center justify-between bg-[#f0f0f0] py-1">
            <Arrow className="w-[6px] rotate-180 text-[#444]" />
            <div className="mt-2 h-[13px] w-3 border border-[#999] bg-linear-to-r from-[#f5f5f5] to-[#ccc]" />
            <Arrow className="w-[6px] text-[#444]" />
          </div>
        </div>
        <div className="flex flex-1">
          <label className="flex flex-1 items-center whitespace-pre pl-[2px] leading-[18px]">
            <Mixed text="命令:" latin={cmdLatin} cjk={cmdCjk} />
            <input value={command} onChange={(e) => setCommand(e.target.value)} className="ml-2 h-full flex-1 font-['Liberation_Mono'] text-[16px] outline-none" />
          </label>
          <div className="mr-4 flex w-[60px] items-center justify-between bg-[#f0f0f0] px-[6px]">
            <Arrow className="w-[6px] rotate-90 text-[#444]" />
            <div className="mr-3 h-[17px] w-[13px] border border-[#999] bg-linear-to-b from-[#f5f5f5] to-[#ccc]" />
            <Arrow className="w-[6px] -rotate-90 text-[#444]" />
          </div>
        </div>
      </div>
    </section>
  );
};

const StatusIcon = ({ name }: { name: string }) => (
  <button aria-label={name} className="flex w-[19px] items-center justify-center border-r border-[#777] bg-[#a9a9a9]">
    <Icon name={name} className="size-[15px]" />
  </button>
);

const StatusBar = () => {
  const [toggles, setToggles] = useState<Record<string, boolean>>({
    捕捉: false, 栅格: false, 正交: false, 极轴: false, 对象捕捉: true, 对象追踪: true, DUCS: true, DYN: false, 线宽: true, QP: false,
  });

  const toggle = (key: string) => setToggles({ ...toggles, [key]: !toggles[key] });

  return (
    <footer className="flex h-5 shrink-0 items-stretch border-t border-[#444] bg-linear-to-b from-[#6e6e6e] to-[#979797] text-black">
      <div className="w-[173px] self-center whitespace-pre pl-[9px] font-['Liberation_Mono'] text-[9px]">10.9792, 55.2246, 0.0000</div>
      {Object.entries(toggles).map(([key, on]) => (
        <button
          key={key}
          onClick={() => toggle(key)}
          className={`flex items-center border-x border-l-[#d5d5d5] border-r-[#666] px-px leading-none ${on ? 'bg-linear-to-b from-[#d5e9ef] to-[#9cc3d0]' : 'bg-[#b0b0b0]'}`}
        >
          <Mixed text={key} latin="font-['Liberation_Mono'] text-[9px]" cjk="text-[11px]" />
        </button>
      ))}
      <div className="ml-auto flex items-stretch">
        <StatusIcon name="model" />
        <StatusIcon name="layoutTabs" />
        <div className="w-4" />
        <StatusIcon name="pan" />
        <StatusIcon name="zoom" />
        <StatusIcon name="wheel" />
        <StatusIcon name="motion" />
        <div className="w-4" />
        <button className="flex items-center gap-[3px] border-r border-[#777] bg-[#a9a9a9] px-[2px] font-['Liberation_Mono'] text-[9px]">
          <Icon name="anno" className="size-[15px]" />
          1:1
          <Arrow className="w-[7px]" />
        </button>
        <StatusIcon name="annoVis" />
        <StatusIcon name="annoAuto" />
        <div className="w-1" />
        <button className="flex items-center whitespace-pre border-r border-[#777] bg-[#a9a9a9] px-px">
          <Icon name="gear" className="size-[15px]" />
          <Mixed text="AutoCAD 经典" latin="font-['Liberation_Mono'] text-[9px]" cjk="text-[11px]" />
          <div className="pl-[2px]"><Arrow className="w-[7px]" /></div>
        </button>
        <StatusIcon name="lock" />
        <div className="w-1" />
        <button aria-label="status menu" className="flex w-[9px] items-center justify-center bg-[#a9a9a9]"><Arrow className="w-[5px]" /></button>
        <StatusIcon name="clean2" />
        <div className="ml-2 flex w-3 items-end">
          <svg viewBox="0 0 12 12" className="size-3" fill="#ddd"><path d="M8 0h2v2H8zM4 4h2v2H4zM8 4h2v2H8zM0 8h2v2H0zM4 8h2v2H4zM8 8h2v2H8z" /></svg>
        </div>
      </div>
    </footer>
  );
};

const App: React.FC = () => (
  <div className="flex h-screen min-w-[1200px] flex-col overflow-hidden rounded-t-lg border border-[#6a6d70] bg-[#08090b] pb-[2px] pl-[6px] pr-[6px] font-['Noto_Sans','Noto_Sans_CJK_SC',sans-serif]">
    <TitleBar />
    <MenuBar />
    <Toolbars />
    <main className="flex min-h-0 flex-1 bg-[#676767] pb-[3px]">
      <div className="w-[25px] shrink-0">
        <SideBar className="h-[364px]" list="line xline pline polygon rect arc circle revcloud spline ellipse ellArc insert block point hatch gradient region table mtext" />
      </div>
      <div className="flex min-w-0 flex-1 flex-col border-2 border-l border-[#b5b5b5] border-b-[#dedede] border-r-[#dedede]">
        <div className="relative min-h-0 flex-1 overflow-hidden bg-black">
          <Drawing />
        </div>
        <SheetTabs />
      </div>
      <div className="w-7 shrink-0 pl-[3px]">
        <SideBar className="h-[326px]" list="erase mcopy mirror offset array move rotate scale stretch trim extend breakPt breakLn join chamfer fillet explode" />
        <SideBar className="h-[77px]" list="front back above under" />
      </div>
    </main>
    <CommandLine />
    <StatusBar />
  </div>
);

export default App;
